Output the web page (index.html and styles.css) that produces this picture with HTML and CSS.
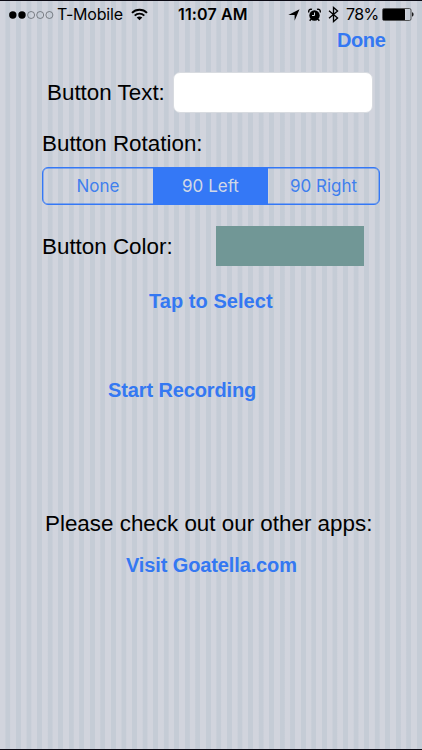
FILE: index.html
```html
<!DOCTYPE html>
<html lang="en">
<head>
  <meta charset="UTF-8">
  <meta name="viewport" content="width=device-width, initial-scale=1.0">
  <title>Button Settings</title>
  <link rel="stylesheet" href="styles.css">
</head>
<body>
  <header class="status-bar">
    <div class="carrier">
      <svg class="signal" width="46" height="10" viewBox="0 0 46 10">
        <circle cx="4.8" cy="5" r="3.7"/>
        <circle cx="14" cy="5" r="3.7"/>
        <g fill="none" stroke="#555a60" stroke-width="0.7">
          <circle cx="23.1" cy="5" r="3.5"/>
          <circle cx="32.2" cy="5" r="3.5"/>
          <circle cx="41.4" cy="5" r="3.5"/>
        </g>
      </svg>
      <span class="carrier-name">T-Mobile</span>
      <svg class="wifi" width="17" height="13" viewBox="0 0 17 13">
        <g fill="none" stroke="#000" stroke-width="1.9">
          <path d="M1 4.9C5 .7 12 .7 16 4.9"/>
          <path d="M3.7 7.6c2.7-2.7 6.9-2.7 9.6 0"/>
        </g>
        <path d="M5.7 9.5c1.6-1.5 4-1.5 5.6 0L8.5 12.3z"/>
      </svg>
    </div>
    <div class="time">11:07 AM</div>
    <div class="indicators">
      <svg class="location" width="12" height="12" viewBox="0 0 12 12">
        <path d="M11.5.3L6.6 11.7V6H.3z"/>
      </svg>
      <svg class="alarm" width="13" height="14" viewBox="0 0 13 14">
        <circle cx="6.5" cy="7.5" r="5.2"/>
        <path d="M.9 4.4C.2 2.4 2 .6 4 1.4M12.1 4.4c.7-2-1.1-3.8-3.1-3M2.9 11.3l-1.2 1.5M10.1 11.3l1.2 1.5" fill="none" stroke="#000" stroke-width="1.4"/>
        <path d="M6.5 4.5v3H4" fill="none" stroke="#d1d5dc" stroke-width="1"/>
      </svg>
      <svg class="bluetooth" width="11" height="17" viewBox="0 0 11 17">
        <path d="M1 4.7l8.6 7.2-4.1 3.6v-14l4.1 3.6L1 12.3" fill="none" stroke="#000" stroke-width="1.3"/>
      </svg>
      <span class="percent">78%</span>
      <svg class="battery" width="32" height="13" viewBox="0 0 32 13">
        <rect x=".5" y=".5" width="28.5" height="12" rx="1.6" fill="none" stroke="#333" stroke-width=".8"/>
        <rect x="1" y="1" width="22" height="11" rx=".6"/>
        <path d="M30.1 4.3c1.9.6 1.9 3.8 0 4.4z"/>
      </svg>
    </div>
  </header>

  <main class="settings">
    <a class="link done">Done</a>

    <div class="row text-row">
      <label class="label text-label" for="button-text">Button Text:</label>
      <input class="text-field" id="button-text" type="text">
    </div>

    <div class="label rotation-label">Button Rotation:</div>
    <div class="segments">
      <button class="segment">None</button>
      <button class="segment selected">90 Left</button>
      <button class="segment">90 Right</button>
    </div>

    <div class="row color-row">
      <div class="label">Button Color:</div>
      <div class="swatch"></div>
    </div>
    <a class="link tap">Tap to Select</a>

    <a class="link record">Start Recording</a>

    <div class="label other-apps">Please check out our other apps:</div>
    <a class="link visit">Visit Goatella.com</a>
  </main>
</body>
</html>
```
FILE: styles.css
```css
* {
  box-sizing: border-box;
}
body {
  margin: 0;
  height: 750px;
  overflow: hidden;
  border-top: 1px solid #0b0a14;
  border-bottom: 1px solid #0b0a14;
  background: repeating-linear-gradient(90deg, #d1d4dd 0, #d1d4dd 5.2px, #c5ccd6 5.7px, #c5ccd6 10.1px, #d1d4dd 10.55px);
  color: #000;
  font-family: "Liberation Sans", Arial, sans-serif;
}
svg {
  display: block;
  flex: none;
}
.status-bar {
  display: grid;
  grid-template-columns: 178px 70px 1fr;
  height: 27px;
  align-items: center;
  font-family: Inter, "Liberation Sans", sans-serif;
  font-size: 16px;
  line-height: 27px;
  white-space: nowrap;
}
.carrier,
.indicators {
  display: flex;
  align-items: center;
}
.carrier {
  padding-left: 8px;
}
.carrier-name {
  margin-left: 3px;
  width: 66px;
  letter-spacing: -0.2px;
}
.wifi {
  margin-left: 8px;
}
.time {
  font-weight: 600;
  letter-spacing: 0.15px;
}
.indicators {
  padding-left: 40px;
}
.alarm {
  margin-left: 8px;
}
.bluetooth {
  margin-left: 7px;
}
.percent {
  width: 32px;
  margin-left: 7px;
  letter-spacing: -0.6px;
}
.battery {
  margin-left: 4px;
}
.settings {
  display: flex;
  flex-direction: column;
  align-items: flex-start;
}
.label {
  font-size: 22.4px;
  line-height: 26px;
  white-space: nowrap;
}
.link {
  color: #3478f2;
  font-size: 20px;
  font-weight: bold;
  letter-spacing: -0.12px;
  line-height: 24px;
  white-space: nowrap;
}
.row {
  display: flex;
  align-items: center;
}
.row .label {
  padding-top: 1px;
}
.done {
  margin-left: 337px;
  letter-spacing: -0.4px;
}
.text-row {
  margin: 20px 0 0 47px;
}
.text-label {
  width: 118px;
}
.text-field {
  width: 200px;
  height: 41px;
  margin-left: 8px;
  padding: 0 9px;
  border: 1px solid #d8dbe0;
  border-radius: 7px;
  background: #fff;
  font-size: 20px;
}
.rotation-label {
  margin: 18px 0 0 42px;
}
.segments {
  display: grid;
  grid-template-columns: 110px 115px 1fr;
  width: 338px;
  height: 38px;
  margin: 10px 0 0 42px;
  overflow: hidden;
  border: 1.3px solid #3478f6;
  border-radius: 6px;
  box-shadow: inset 0 0 0 0.4px #3478f6;
}
.segment {
  padding: 0;
  border: none;
  background: none;
  color: #3f7fee;
  font-family: Inter, "Liberation Sans", sans-serif;
  font-size: 17px;
}
.segment.selected {
  background: #3478f6;
  color: #d1d8e6;
}
.color-row {
  justify-content: space-between;
  width: 322px;
  margin: 21px 0 0 42px;
}
.swatch {
  width: 148px;
  height: 40px;
  background: #719796;
}
.tap {
  margin: 23px 0 0 149px;
  letter-spacing: 0.05px;
}
.record {
  margin: 65px 0 0 108px;
}
.other-apps {
  margin: 109px 0 0 45px;
}
.visit {
  margin: 16px 0 0 126px;
}
```
